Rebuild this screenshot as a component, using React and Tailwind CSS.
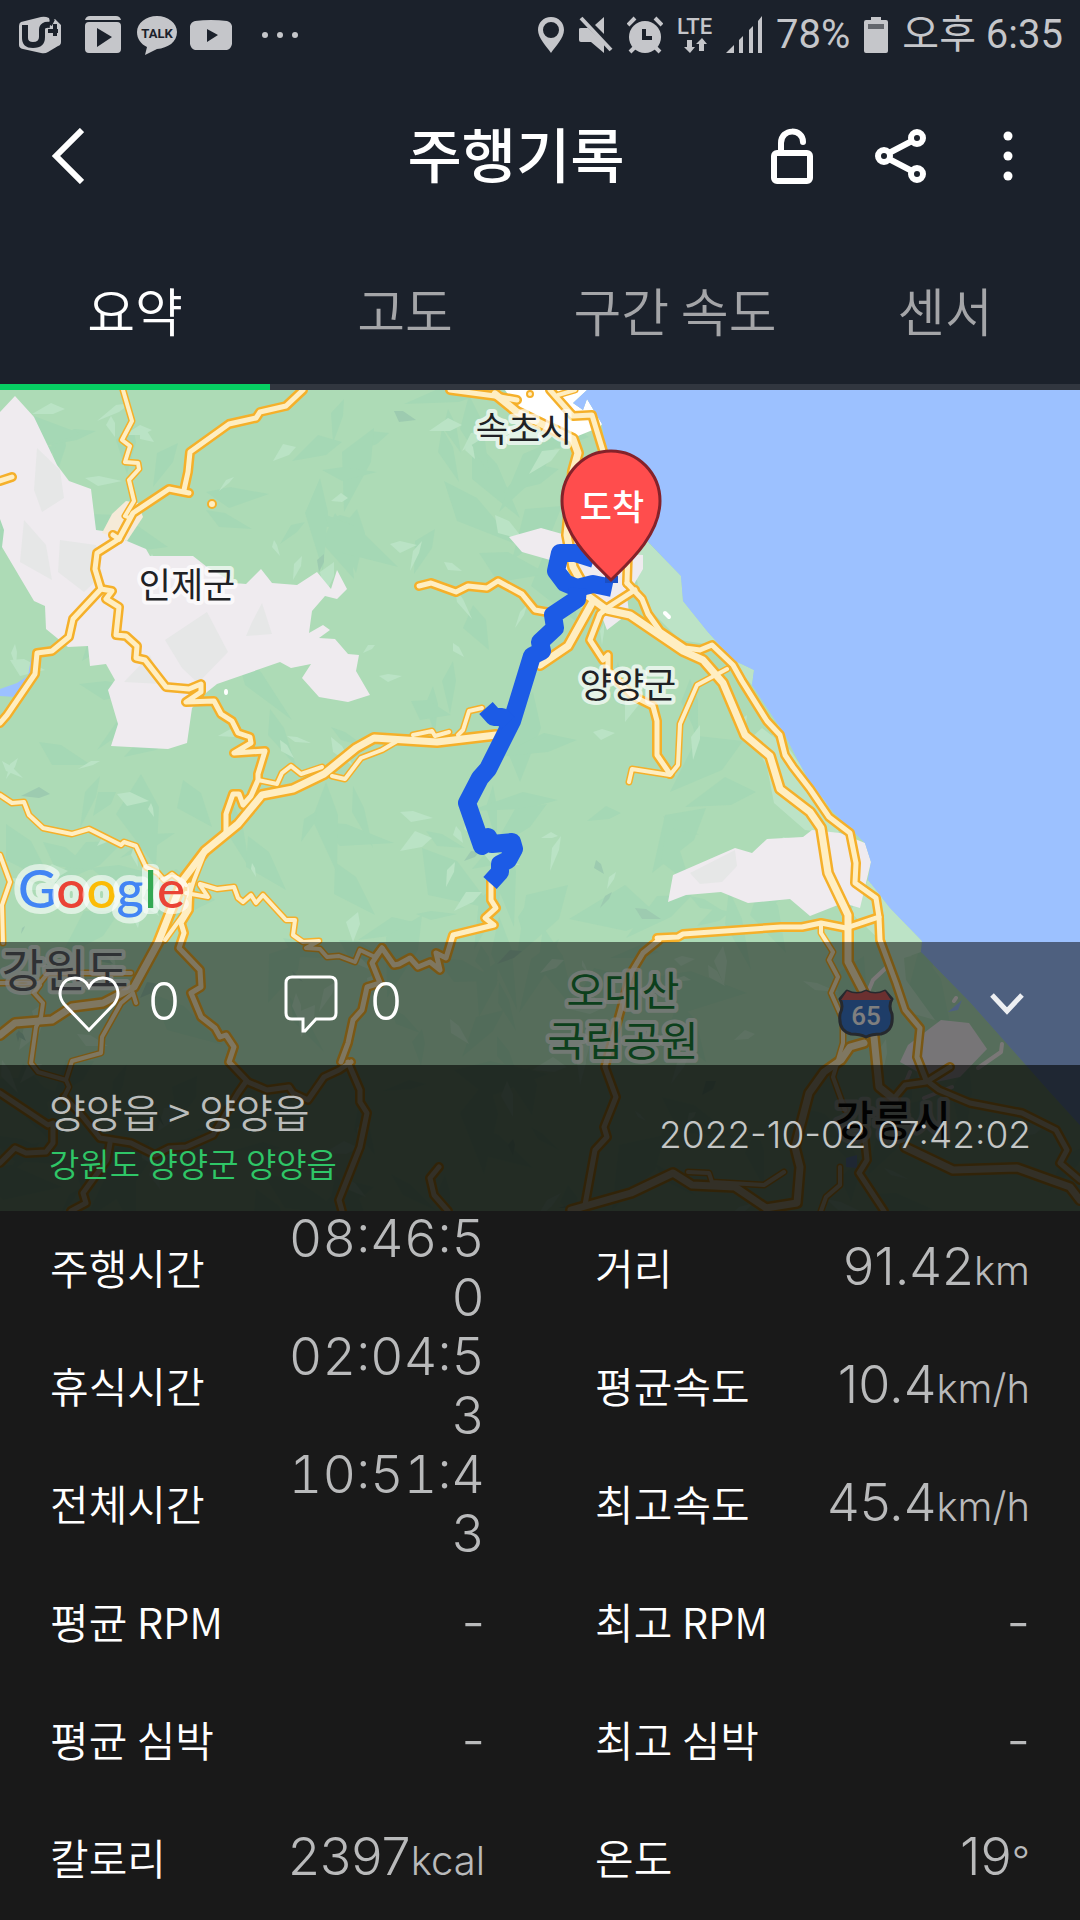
import React, { useState } from 'react';

const TABS = ['요약', '고도', '구간 속도', '센서'];

const STATS = [
  { label: '주행시간', value: '08:46:50', clock: true },
  { label: '거리', value: '91.42', unit: 'km' },
  { label: '휴식시간', value: '02:04:53', clock: true },
  { label: '평균속도', value: '10.4', unit: 'km/h' },
  { label: '전체시간', value: '10:51:43', clock: true },
  { label: '최고속도', value: '45.4', unit: 'km/h' },
  { label: '평균 RPM', value: '-' },
  { label: '최고 RPM', value: '-' },
  { label: '평균 심박', value: '-' },
  { label: '최고 심박', value: '-' },
  { label: '칼로리', value: '2397', unit: 'kcal' },
  { label: '온도', value: '19', unit: '°' },
];

const LAND =
  '0,390 587,390 573,403 583,410 587,399 602,424 606,451 625,520 650,544 681,576 683,601 707,631 733,660 754,670 752,685 785,735 807,778 833,812 852,830 865,843 871,862 868,880 890,908 922,941 921,952 970,1002 1050,1092 1080,1125 1080,1211 0,1211';

const VALLEYS = [
  '0,412 15,396 34,417 57,465 69,481 91,489 96,530 103,531 127,541 146,549 150,556 193,556 207,567 234,583 246,584 261,569 272,583 297,585 317,572 331,589 337,570 347,589 337,599 325,596 312,611 309,633 323,625 330,630 319,638 335,639 348,654 359,655 356,671 370,695 348,702 319,697 302,678 311,664 291,668 280,662 217,684 207,692 192,708 187,743 168,749 111,746 118,724 108,690 115,680 106,664 90,666 88,646 68,647 46,629 45,606 34,601 2,547 4,530 0,519',
  '509,537 541,528 580,539 607,553 643,555 643,569 627,596 629,613 607,630 590,585 550,560 522,552',
  '673,875 735,848 752,853 767,839 803,837 812,830 840,833 865,843 871,862 860,908 843,903 810,916 790,899 748,903 721,892 686,895 668,902',
  '900,1062 908,1045 941,1020 969,1023 987,1049 960,1077 936,1082',
];

const VALLEY_SHADES = [
  '37,448 60,470 64,498 42,512 34,490',
  '60,540 96,545 102,575 84,592 58,572',
  '165,640 207,612 228,652 198,683 182,668',
  '252,622 262,603 272,634 246,636',
  '124,682 150,655 162,684',
  '24,520 46,545 52,580 20,562',
  '690,873 735,850 737,866 722,882 700,884',
];

const LOWLANDS = [
  '628,520 650,544 681,576 683,601 707,631 733,660 754,670 752,685 733,665 712,645 680,640 640,600',
  '762,728 752,737 767,767 774,803 805,830 840,835 825,800 790,750',
  '868,880 890,908 922,941 921,952 904,958 906,980 935,1020 900,1010 880,940 850,912',
];

// level 3 = expressway, 2 = national road, 1 = local road
const ROADS = [
  [1, '123,390 132,421 122,440 130,446 125,462 138,463 139,469 129,480 134,501 125,516 130,518'],
  [2, '303,390 286,406 260,412 256,418 229,424 190,452 188,472 184,490'],
  [2, '189,493 169,489 133,513 119,539 97,553 95,569 101,589 73,619 69,637 52,651 37,653 35,674 7,715 0,723'],
  [2, '113,535 119,539'],
  [2, '0,481 12,477'],
  [2, '101,589 112,591 106,599 119,607 116,635 126,636 137,646 136,658 145,660 166,687 189,689 201,684 201,692 186,702 214,701 221,714 232,721 238,733 250,737 251,743 234,753 265,751 258,774 258,780 251,796 243,805 239,794 233,794 226,814 226,831'],
  [3, '496,735 437,742 374,738 356,748 324,774 293,789 262,795 238,824 205,851 183,880 158,943 134,987 103,1003 72,1007 52,1020 15,1023 0,1035'],
  [1, '258,780 277,784 282,773 291,766 301,774 322,767'],
  [1, '332,776 345,779 361,758 382,750 399,740'],
  [1, '413,735 432,731 435,736 449,732'],
  [1, '458,735 463,730 469,711 482,708'],
  [1, '0,795 12,803 24,802 29,815 43,828 72,834 89,829 121,845 124,842 136,846 146,867 158,873 164,880 172,874 186,885'],
  [1, '200,884 217,889 234,887 238,898 243,902 251,895 256,903 263,895 286,920 295,920 293,935 303,942 319,941 306,948 320,949 327,957 339,956 355,962 360,950 375,957'],
  [2, '375,957 382,948 394,965 399,964 410,958 418,967 430,962 440,970 436,953 446,958 453,935 494,925 485,918 496,908 491,900 491,880'],
  [1, '200,885 208,897 186,893'],
  [1, '205,852 194,880 183,915 165,940'],
  [2, '190,885 189,910 181,923 184,933 179,948 200,970 201,987 191,993 201,1017 215,1028 220,1037 226,1035 234,1047 229,1062 248,1082 267,1090 289,1087 293,1093 308,1100 324,1077 339,1070 351,1062'],
  [2, '382,948 372,963 380,983 367,987 362,1010 353,1020 348,1043 341,1062'],
  [2, '348,1062 360,1090 360,1102 367,1113 360,1147 339,1200 342,1211'],
  [1, '136,1003 133,993 121,1003 102,1037 101,1053 72,1061 66,1080 69,1087 64,1097'],
  [2, '64,1097 79,1112 100,1138 131,1143 155,1155 169,1148 186,1147 213,1135 238,1093 245,1083'],
  [1, '40,985 34,993 43,1003 41,1017 36,1027 31,1063 38,1072 66,1080'],
  [2, '0,1093 48,1125 53,1123 53,1143 46,1152 26,1153 15,1148 0,1163'],
  [2, '110,1143 107,1160 83,1193 86,1203 71,1211'],
  [1, '0,983 40,983 48,973 131,973'],
  [2, '439,1167 430,1178 434,1195 448,1211'],
  [1, '0,855 10,882 2,905 3,943'],
  [2, '450,390 495,396 517,400'],
  [3, '495,394 517,412 550,428 573,439 578,453 573,471 567,535 573,567 583,585'],
  [2, '550,390 573,416 592,415 603,451'],
  [1, '558,395 575,390'],
  [2, '628,550 627,583'],
  [2, '635,590 607,608 600,614 590,640 603,660 608,655 608,671 633,696 653,706 657,721 657,755 670,774'],
  [2, '627,583 642,599 648,614 660,631 685,648 700,650 712,645 733,665 742,681 767,721 780,735 785,755 793,767 810,789 829,817 850,833 856,863 855,883 876,898 879,917 880,940 896,983 905,1010 920,1028 917,1057 926,1080 939,1090 970,1103 1022,1113 1056,1130 1067,1150 1060,1163 1080,1180'],
  [3, '588,596 607,610 630,615 683,651 703,660 723,683 745,735 770,756 780,789 810,812 821,828 828,873 848,915 848,962 864,993 874,1037 879,1087 895,1100'],
  [2, '419,586 431,583 456,592 468,586 487,588 498,581 522,594 535,610 552,613'],
  [3, '592,603 568,646 540,665'],
  [1, '727,669 697,685 680,724 678,765 670,775 632,769 629,782'],
  [2, '657,938 678,937 683,934 781,927 802,927 821,923 846,928 879,917'],
  [2, '659,940 643,953 631,973 605,1067 616,1097 604,1127 607,1137 595,1150 585,1205'],
  [1, '821,923 821,933 833,952 829,960 838,977 831,993 843,1020 843,1043 833,1077 845,1110'],
  [3, '864,1043 850,1047 841,1060 824,1072 809,1093 795,1147 800,1167 797,1203 766,1208 735,1187 692,1185 673,1173 631,1193 571,1210'],
  [2, '864,1130 867,1160 859,1173 884,1211'],
  [3, '905,1147 953,1170 1017,1168 1070,1187 1080,1200'],
  [1, '840,1167 840,1185 826,1197 821,1211'],
  [2, '895,1097 905,1085 926,1082 950,1067'],
  [1, '688,1172 709,1173 712,1182 764,1185 784,1172'],
];

const CASING_WIDTH = { 1: 7, 2: 10, 3: 12 };
const SURFACE_WIDTH = { 1: 4, 2: 5, 3: 7 };

const TRACKS = [
  '594,559 575,553 560,553 556,571 565,583 577,588 593,584 612,588',
  '578,588 577,599 553,615 555,628 540,642 542,651 532,656 512,721 488,769 480,778 467,803 482,846 488,837 492,844 512,842 514,849 508,860 500,864 500,872 490,883',
  '508,723 502,717 494,717 486,708',
];

// Small shards that give the hills their relief
function makeFacets(count, seed, size) {
  let s = seed;
  const next = () => {
    s = (s * 16807) % 2147483647;
    return s / 2147483647;
  };
  const facets = [];
  for (let i = 0; i < count; i++) {
    const x = next() * 1080;
    const y = 390 + next() * 821;
    const angle = next() * Math.PI;
    const long = size * (0.5 + next());
    const short = long * (0.2 + next() * 0.4);
    const dx = Math.cos(angle);
    const dy = Math.sin(angle);
    facets.push(
      [
        [x + dx * long, y + dy * long],
        [x - dy * short, y + dx * short],
        [x - dx * long * 0.6, y - dy * long * 0.6],
        [x + dy * short * 0.4, y - dx * short * 0.4],
      ]
        .map(([px, py]) => `${Math.round(px)},${Math.round(py)}`)
        .join(' ')
    );
  }
  return facets;
}

const SHADE_FACETS = makeFacets(220, 4127, 40);
const LIGHT_FACETS = makeFacets(150, 911, 17);
const DEEP_FACETS = makeFacets(30, 77, 12);

function Facets({ items, fill }) {
  return (
    <g fill={fill}>
      {items.map((points, i) => (
        <polygon key={i} points={points} />
      ))}
    </g>
  );
}

function MapLabel({ x, y, size = 34, fill = '#202124', weight = 400, children }) {
  return (
    <text
      x={x}
      y={y}
      textAnchor="middle"
      fontSize={size}
      fontWeight={weight}
      fill={fill}
      stroke="#ffffff"
      strokeOpacity="0.7"
      strokeWidth="8"
      strokeLinejoin="round"
      paintOrder="stroke"
    >
      {children}
    </text>
  );
}

function RouteMap() {
  return (
    <svg viewBox="0 390 1080 821" className="col-start-1 row-start-1 block w-full h-auto" role="img" aria-label="주행 경로">
      <defs>
        <clipPath id="land">
          <polygon points={LAND} />
        </clipPath>
      </defs>
      <rect x="0" y="390" width="1080" height="821" fill="#9cc1ff" />
      <g clipPath="url(#land)">
        <polygon points={LAND} fill="#addbb6" />
        <Facets items={SHADE_FACETS} fill="#a5d8b5" />
        <Facets items={LIGHT_FACETS} fill="#bae3c5" />
        <Facets items={DEEP_FACETS} fill="#9dcbb0" />
        <Facets items={LOWLANDS} fill="#bce3c6" />
        <Facets items={VALLEYS} fill="#efebef" />
        <Facets items={VALLEY_SHADES} fill="#e6e7e7" />
        <polygon points="102,533 112,514 126,501 138,503 143,517 127,541" fill="#f5ead8" />
        <polygon points="0,689 17,683 28,676 31,658 36,651 36,681 15,697 0,696" fill="#9cc1ff" />
        <polygon points="530,667 541,664 534,670" fill="#9cc1ff" />
        <polygon points="948,1012 962,1000 958,1010" fill="#9cc1ff" />
        <polygon points="846,1158 857,1155 857,1168 846,1167" fill="#9cc1ff" />
        <polygon points="505,390 520,412 550,424 573,438 600,427 602,424 587,399 583,410 573,403 587,390" fill="#ffffff" />
        <ellipse cx="226" cy="692" rx="2" ry="3" fill="#ffffff" />
        <path d="M665 613 L669 617" stroke="#ffffff" strokeWidth="4" strokeLinecap="round" />
      </g>
      <g fill="none" stroke="#f5efef" strokeWidth="4" strokeLinecap="round" strokeLinejoin="round">
        <path d="M888 966 L873 980 L868 992" />
        <path d="M1002 1044 L1001 1052 L978 1068" />
        <path d="M956 998 L954 1001 M910 1072 L905 1084 M924 1098 L952 1087" />
      </g>
      <g fill="none" strokeLinecap="round" strokeLinejoin="round">
        {ROADS.map(([level, points], i) => (
          <polyline key={i} points={points} stroke="#f5b02a" strokeWidth={CASING_WIDTH[level]} />
        ))}
        {ROADS.map(([level, points], i) => (
          <polyline key={i} points={points} stroke="#ffeec2" strokeWidth={SURFACE_WIDTH[level]} />
        ))}
      </g>
      <circle cx="212" cy="504" r="4" fill="#ffeec2" stroke="#f5b02a" strokeWidth="2" />
      <circle cx="530" cy="394" r="3" fill="#ffeec2" stroke="#f5b02a" strokeWidth="2" />

      <g fontFamily='"Noto Sans CJK KR", sans-serif'>
        <MapLabel x={524} y={442} size={35}>속초시</MapLabel>
        <MapLabel x={187} y={598} size={35}>인제군</MapLabel>
        <MapLabel x={628} y={698} size={35}>양양군</MapLabel>
        <MapLabel x={65} y={987} size={46} fill="#5f6368">강원도</MapLabel>
        <MapLabel x={623} y={1006} size={41} fill="#188038">오대산</MapLabel>
        <MapLabel x={623} y={1056} size={41} fill="#188038">국립공원</MapLabel>
        <MapLabel x={893} y={1136} size={42} fill="#0c0c0d" weight={500}>강릉시</MapLabel>
      </g>

      <g stroke="#4c525c" strokeWidth="3" strokeLinejoin="round">
        <path
          d="M847 991 Q857 996 866 991 Q875 996 885 991 L892 999 Q888 1006 892 1014 Q894 1031 881 1034 Q872 1034 866 1037 Q860 1034 851 1034 Q838 1031 840 1014 Q844 1006 840 999 Z"
          fill="#3c7bd0"
        />
        <path d="M847 991 Q857 996 866 991 Q875 996 885 991 L891 1000 H841 Z" fill="#d66060" stroke="none" />
      </g>
      <text x="866" y="1025" textAnchor="middle" fontFamily="Roboto, sans-serif" fontSize="26" fontWeight="500" fill="#ffffff">
        65
      </text>

      <text
        x="18"
        y="908"
        fontFamily="Lato, sans-serif"
        fontSize="53"
        fontWeight="500"
        stroke="#ffffff"
        strokeOpacity="0.6"
        strokeWidth="12"
        strokeLinejoin="round"
        paintOrder="stroke"
      >
        <tspan fill="#4285f4">G</tspan>
        <tspan fill="#ea4335">o</tspan>
        <tspan fill="#fbbc05">o</tspan>
        <tspan fill="#4285f4">g</tspan>
        <tspan fill="#34a853">l</tspan>
        <tspan fill="#ea4335">e</tspan>
      </text>

      <g fill="none" stroke="#1c5be6" strokeWidth="18" strokeLinejoin="round">
        {TRACKS.map((points) => (
          <polyline key={points} points={points} />
        ))}
      </g>

      <rect x="605" y="576" width="13" height="7" fill="#1b4fc4" />
      <path
        d="M611 580 C596 565 562 536 562 501 A49 50 0 0 1 660 501 C660 536 626 565 611 580 Z"
        fill="#ff4d4d"
        stroke="#85222a"
        strokeWidth="3"
      />
      <text x="612" y="520" textAnchor="middle" fontFamily='"Noto Sans CJK KR", sans-serif' fontSize="35" fontWeight="500" fill="#ffffff">
        도착
      </text>
    </svg>
  );
}

function StatusBar() {
  return (
    <div className="flex items-center justify-between pl-[19px] pr-[17px] h-[70px] text-[#c5c6ca]">
      <div className="flex items-center gap-3">
        <svg width="51" height="38" viewBox="0 0 51 38" fill="currentColor">
          <path d="M2 6 L22 1 Q26 0 30 2 L31 6 L36 3 L42 9 V26 Q42 29 39 30 L29 36 Q26 38 22 37 L4 33 Q0 32 0 29 V10 Q0 7 2 6 Z" />
          <path d="M6 9 V22 Q6 29 14 29 Q23 29 23 21 V14 Q23 8 31 9" fill="none" stroke="#1b212b" strokeWidth="6" />
          <path d="M29 15 H39 M36 8 V20 M34 3 L31 9" stroke="#1b212b" strokeWidth="4" />
        </svg>
        <svg width="42" height="38" viewBox="0 0 42 38" fill="currentColor">
          <path d="M3 4 Q4 0 8 0 H34 Q38 0 39 4 Z" />
          <path fillRule="evenodd" d="M7 6 H35 Q39 6 39 10 V33 Q39 37 35 37 H7 Q3 37 3 33 V10 Q3 6 7 6 Z M15 12 V31 L30 21 Z" />
        </svg>
        <svg width="42" height="40" viewBox="0 0 42 40" fill="currentColor">
          <path d="M21 1 C32 1 41 8 41 17 C41 27 32 33 21 34 L9 40 L11 32 C5 29 1 24 1 17 C1 8 10 1 21 1 Z" />
          <text x="21" y="23" textAnchor="middle" fontFamily="Roboto, sans-serif" fontSize="13" fontWeight="700" fill="#1b212b">
            TALK
          </text>
        </svg>
        <svg width="42" height="30" viewBox="0 0 42 30" fill="currentColor">
          <path fillRule="evenodd" d="M5 1 Q21 -1 37 1 Q41 2 42 6 V24 Q41 29 37 30 H5 Q1 29 0 24 V6 Q1 2 5 1 Z M17 9 V22 L28 15 Z" />
        </svg>
        <svg width="60" height="8" viewBox="0 0 60 8" fill="currentColor">
          <circle cx="21" cy="4" r="3" />
          <circle cx="36" cy="4" r="3" />
          <circle cx="51" cy="4" r="3" />
        </svg>
      </div>
      <div className="flex items-center gap-[14px] font-[Roboto,'Noto_Sans_CJK_KR',sans-serif] text-[40px] leading-none">
        <svg width="28" height="38" viewBox="0 0 28 38" fill="currentColor">
          <path fillRule="evenodd" d="M14 1 C22 1 27 7 27 14 C27 22 18 31 14 37 C10 31 1 22 1 14 C1 7 6 1 14 1 Z M14 6 A8 8 0 1 0 14 22 A8 8 0 1 0 14 6 Z" />
        </svg>
        <svg width="34" height="38" viewBox="0 0 34 38" fill="currentColor">
          <path d="M0 13 Q0 12 2 12 H9 L25 28 V37 L12 26 H2 Q0 26 0 24 Z" />
          <path d="M25 1 V18 L16 9 Z" />
          <path d="M2 2 L32 34" stroke="currentColor" strokeWidth="4" />
        </svg>
        <svg width="36" height="38" viewBox="0 0 36 38" fill="currentColor">
          <circle cx="18" cy="21" r="16" />
          <path d="M1 9 L8 2 M28 2 L35 9 M3 36 L8 31 M33 36 L28 31" stroke="currentColor" strokeWidth="4" fill="none" />
          <path d="M17 13 V22 H25" fill="none" stroke="#1b212b" strokeWidth="4" />
        </svg>
        <div className="flex flex-col items-center">
          <span className="text-[22px] leading-[22px] font-medium">LTE</span>
          <svg width="24" height="16" viewBox="0 0 24 16" fill="currentColor">
            <path d="M4 2 H9 V9 H12 L7 15 L1 9 H4 Z M16 13 H21 V6 H24 L19 0 L13 6 H16 Z" />
          </svg>
        </div>
        <svg width="36" height="38" viewBox="0 0 36 38" fill="currentColor">
          <path d="M0 37 L8 29 V37 Z M13 37 V24 L17 20 V37 Z M23 37 V14 L27 10 V37 Z M32 37 V5 L36 0 V37 Z" />
        </svg>
        <span>78%</span>
        <svg width="24" height="38" viewBox="0 0 24 38">
          <path d="M7 1 H17 V4 H22 Q24 4 24 6 V35 Q24 37 22 37 H2 Q0 37 0 35 V6 Q0 4 2 4 H7 Z" fill="currentColor" />
          <rect x="4" y="8" width="16" height="5" fill="#63666c" />
        </svg>
        <span>오후 6:35</span>
      </div>
    </div>
  );
}

function TitleBar() {
  return (
    <header className="flex items-center h-[172px] pr-[18px]">
      <div className="w-[294px]">
        <button type="button" aria-label="뒤로" className="block pl-[50px] pr-6 py-6">
          <svg width="34" height="56" viewBox="0 0 34 56" fill="none" stroke="currentColor" strokeWidth="6">
            <path d="M32 2 L6 28 L32 54" />
          </svg>
        </button>
      </div>
      <h1 className="flex-1 pb-1.5 text-center text-[59px] leading-[72px] font-medium">주행기록</h1>
      <button type="button" aria-label="잠금 해제" className="flex justify-center w-[108px] py-6">
        <svg width="42" height="56" viewBox="0 0 42 56" fill="none" stroke="currentColor" strokeWidth="6">
          <rect x="3" y="25" width="36" height="28" rx="3" />
          <path d="M10 25 V15 C10 0 32 0 32 14" strokeLinecap="round" />
        </svg>
      </button>
      <button type="button" aria-label="공유" className="flex justify-center w-[108px] py-6">
        <svg width="52" height="56" viewBox="0 0 52 56" fill="none" stroke="currentColor" strokeWidth="6">
          <circle cx="10" cy="28" r="6" />
          <circle cx="43" cy="10" r="6" />
          <circle cx="43" cy="46" r="6" />
          <path d="M15 25 L38 13 M15 31 L38 43" />
        </svg>
      </button>
      <button type="button" aria-label="더보기" className="flex justify-center w-[108px] py-6">
        <svg width="12" height="56" viewBox="0 0 12 56" fill="currentColor">
          <circle cx="6" cy="8" r="4.5" />
          <circle cx="6" cy="28" r="4.5" />
          <circle cx="6" cy="48" r="4.5" />
        </svg>
      </button>
    </header>
  );
}

function Tabs({ active, onSelect }) {
  return (
    <nav className="flex">
      {TABS.map((tab) => (
        <button
          key={tab}
          type="button"
          onClick={() => onSelect(tab)}
          className={
            tab === active
              ? 'flex-1 h-[148px] pb-1.5 border-b-6 border-[#07cf63] text-[52px] font-[350] text-white'
              : 'flex-1 h-[148px] pb-1.5 border-b-6 border-[#31363f] text-[52px] font-[350] text-[#a4a5a8]'
          }
        >
          {tab}
        </button>
      ))}
    </nav>
  );
}

function RideOverlay() {
  return (
    <div className="relative col-start-1 row-start-1 self-end">
      <div className="flex items-center h-[123px] pl-[58px] pr-[56px] bg-black/50 text-white">
        <button type="button" aria-label="좋아요" className="flex items-center gap-[28px] w-[226px]">
          <svg width="62" height="56" viewBox="0 0 62 56" fill="none" stroke="currentColor" strokeWidth="3">
            <path d="M31 54 L6 28 C-2 18 3 2 17 2 C25 2 29 7 31 11 C33 7 37 2 45 2 C59 2 64 18 56 28 Z" />
          </svg>
          <span className="pb-1 font-[Inter,sans-serif] font-light text-[52px]">0</span>
        </button>
        <button type="button" aria-label="댓글" className="flex items-center gap-[32px]">
          <svg width="54" height="58" viewBox="0 0 54 58" fill="none" stroke="currentColor" strokeWidth="3">
            <path d="M8 2 H46 Q52 2 52 8 V38 Q52 44 46 44 H32 L21 56 H19 V44 H8 Q2 44 2 38 V8 Q2 2 8 2 Z" />
          </svg>
          <span className="pb-1 font-[Inter,sans-serif] font-light text-[52px]">0</span>
        </button>
        <button type="button" aria-label="접기" className="ml-auto">
          <svg width="34" height="22" viewBox="0 0 34 22" fill="none" stroke="currentColor" strokeOpacity="0.9" strokeWidth="5">
            <path d="M2 2 L17 18 L32 2" />
          </svg>
        </button>
      </div>
      <div className="flex items-center justify-between h-[146px] px-[49px] pb-1.5 bg-black/80">
        <div className="font-[350]">
          <p className="text-[40px] leading-[56px] text-[#bbbdbc]">양양읍 &gt; 양양읍</p>
          <p className="text-[33px] leading-[48px] text-[#2fc667]">강원도 양양군 양양읍</p>
        </div>
        <time className="font-[Inter,sans-serif] font-light text-[37px] text-[#c4c6c5]">2022-10-02 07:42:02</time>
      </div>
    </div>
  );
}

function Stats() {
  return (
    <dl className="grid grid-cols-2 gap-x-[110px] px-[50px]">
      {STATS.map(({ label, value, unit, clock }) => (
        <div key={label} className="flex items-center justify-between h-[118px]">
          <dt className="pb-2 text-[42px] font-[350] whitespace-nowrap">{label}</dt>
          <dd
            className={`w-52 pb-1 text-right font-[Inter,'Noto_Sans_CJK_KR',sans-serif] font-light text-[52px] leading-[59px] text-[#b9babb] ${
              clock ? 'break-all tabular-nums' : 'whitespace-nowrap'
            }`}
          >
            {value}
            {unit && <span className="text-[40px]">{unit}</span>}
          </dd>
        </div>
      ))}
    </dl>
  );
}

const App = () => {
  const [activeTab, setActiveTab] = useState('요약');

  return (
    <div className="min-h-screen bg-[#191919] text-white font-['Noto_Sans_CJK_KR',sans-serif]">
      <div className="bg-[#1b212b]">
        <StatusBar />
        <TitleBar />
        <Tabs active={activeTab} onSelect={setActiveTab} />
      </div>
      <section className="grid">
        <RouteMap />
        <RideOverlay />
      </section>
      <Stats />
    </div>
  );
};

export default App;
